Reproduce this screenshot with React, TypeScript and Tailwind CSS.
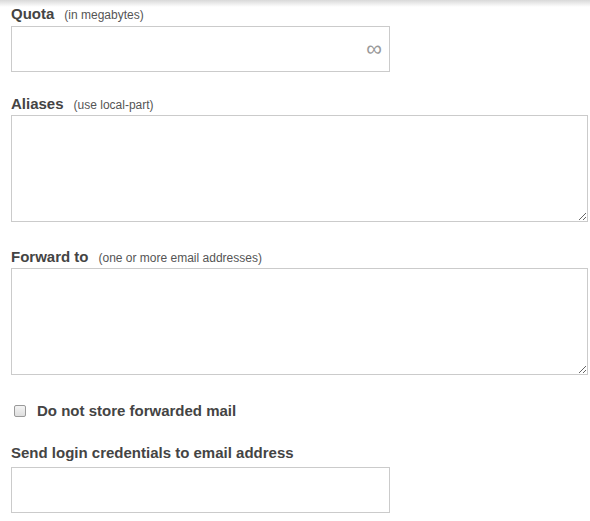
import React from 'react'

function Label({ title, hint }: { title: string; hint?: string }) {
  return (
    <div className="h-[20px] leading-[20px] flex items-baseline">
      <span className="text-[15px] font-bold text-[#444]">{title}</span>
      {hint && <span className="ml-[10px] text-[12px] text-[#555]">{hint}</span>}
    </div>
  )
}

export default function App() {
  return (
    <div className="relative w-[590px] h-[521px] bg-white overflow-hidden font-['Liberation_Sans',Arial,sans-serif]">
      <div className="absolute top-0 left-0 right-0 h-[7px] bg-gradient-to-b from-[#d9d9d9] to-white/0" />
      <div className="pl-[11px] pr-[2px] pt-[4px]">
        <Label title="Quota" hint="(in megabytes)" />
        <div className="mt-[2px] w-[379px] h-[46px] border border-[#cbcbcb] flex items-center justify-end pr-[7px]">
          <span className="text-[22px] text-[#999] leading-none">∞</span>
        </div>

        <div className="mt-[22px]">
          <Label title="Aliases" hint="(use local-part)" />
        </div>
        <textarea className="mt-[1px] block w-[577px] h-[107px] border border-[#cbcbcb] outline-none" />

        <div className="mt-[25px]">
          <Label title="Forward to" hint="(one or more email addresses)" />
        </div>
        <textarea className="mt-[1px] block w-[577px] h-[107px] border border-[#cbcbcb] outline-none" />

        <div className="mt-[26px] h-[20px] flex items-center">
          <span className="ml-[3px] w-[12px] h-[12px] rounded-[2px] border border-[#9a9a9a] bg-gradient-to-b from-[#f4f4f4] to-[#dedede]" />
          <span className="ml-[11px] text-[15px] font-bold text-[#444] leading-[20px]">Do not store forwarded mail</span>
        </div>

        <div className="mt-[22px]">
          <Label title="Send login credentials to email address" />
        </div>
        <div className="mt-[4px] w-[379px] h-[46px] border border-[#cbcbcb]" />
      </div>
    </div>
  )
}
